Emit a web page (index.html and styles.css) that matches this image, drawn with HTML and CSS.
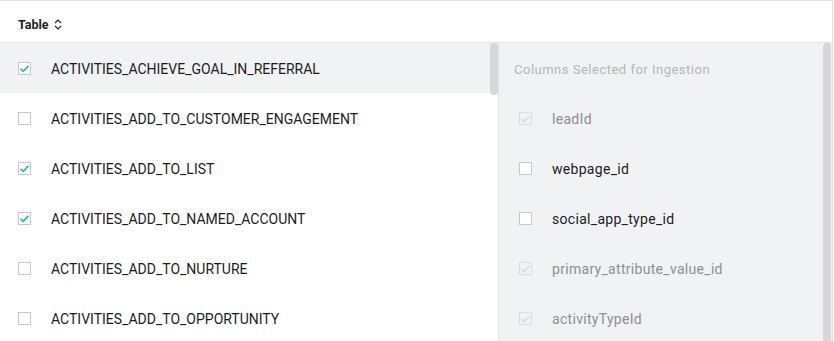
FILE: index.html
```html
<!DOCTYPE html>
<html>
<head>
<meta charset="utf-8">
<link rel="stylesheet" href="styles.css">
</head>
<body>
<div class="frame">
  <div class="header">
    <span class="header-title">Table</span>
    <svg class="sort" width="8" height="11" viewBox="0 0 8 11"><path d="M1 4 L4 1 L7 4 M1 7 L4 10 L7 7" fill="none" stroke="#222" stroke-width="1.2"/></svg>
  </div>
  <div class="body">
    <div class="tables">
      <div class="row active"><span class="cb checked"><svg viewBox="0 0 13 13"><path d="M2.5 6.8 L5.2 9.3 L10.5 3.8" fill="none" stroke="#1fbdb5" stroke-width="1.8"/></svg></span><span class="label">ACTIVITIES_ACHIEVE_GOAL_IN_REFERRAL</span></div>
      <div class="row"><span class="cb"></span><span class="label">ACTIVITIES_ADD_TO_CUSTOMER_ENGAGEMENT</span></div>
      <div class="row"><span class="cb checked"><svg viewBox="0 0 13 13"><path d="M2.5 6.8 L5.2 9.3 L10.5 3.8" fill="none" stroke="#1fbdb5" stroke-width="1.8"/></svg></span><span class="label">ACTIVITIES_ADD_TO_LIST</span></div>
      <div class="row"><span class="cb checked"><svg viewBox="0 0 13 13"><path d="M2.5 6.8 L5.2 9.3 L10.5 3.8" fill="none" stroke="#1fbdb5" stroke-width="1.8"/></svg></span><span class="label">ACTIVITIES_ADD_TO_NAMED_ACCOUNT</span></div>
      <div class="row"><span class="cb"></span><span class="label">ACTIVITIES_ADD_TO_NURTURE</span></div>
      <div class="row"><span class="cb"></span><span class="label">ACTIVITIES_ADD_TO_OPPORTUNITY</span></div>
      <div class="thumb thumb-left"></div>
    </div>
    <div class="columns">
      <div class="col-title">Columns Selected for Ingestion</div>
      <div class="row col disabled"><span class="cb dis"><svg viewBox="0 0 13 13"><path d="M2.5 6.8 L5.2 9.3 L10.5 3.8" fill="none" stroke="#d3d4d8" stroke-width="1.2"/></svg></span><span class="label">leadId</span></div>
      <div class="row col"><span class="cb"></span><span class="label">webpage_id</span></div>
      <div class="row col"><span class="cb"></span><span class="label">social_app_type_id</span></div>
      <div class="row col disabled"><span class="cb dis"><svg viewBox="0 0 13 13"><path d="M2.5 6.8 L5.2 9.3 L10.5 3.8" fill="none" stroke="#d3d4d8" stroke-width="1.2"/></svg></span><span class="label">primary_attribute_value_id</span></div>
      <div class="row col disabled"><span class="cb dis"><svg viewBox="0 0 13 13"><path d="M2.5 6.8 L5.2 9.3 L10.5 3.8" fill="none" stroke="#d3d4d8" stroke-width="1.2"/></svg></span><span class="label">activityTypeId</span></div>
      <div class="thumb thumb-right"></div>
    </div>
  </div>
</div>
</body>
</html>
```
FILE: styles.css
```css
html, body {
  margin: 0;
  padding: 0;
  background: #fff;
  overflow: hidden;
}
body {
  font-family: Roboto, "Liberation Sans", sans-serif;
  color: #222;
}
.frame {
  width: 832px;
  height: 341px;
  border-top: 1px solid #e3e3e3;
  border-right: 1px solid #e3e3e3;
  overflow: hidden;
}
.header {
  height: 42px;
  box-sizing: border-box;
  border-bottom: 1px solid #e3e3e3;
  display: flex;
  align-items: center;
  padding-left: 18px;
  padding-top: 6px;
  gap: 5px;
}
.header-title {
  font-size: 12.5px;
  font-weight: 700;
  color: #1f1f1f;
}
.sort {
  display: block;
  margin-top: -1px;
}
.body {
  display: flex;
  height: 300px;
}
.tables {
  position: relative;
  width: 498px;
  flex: none;
}
.row {
  height: 50px;
  display: flex;
  align-items: center;
  padding-left: 18px;
  gap: 20px;
  font-size: 14px;
  box-sizing: border-box;
  padding-top: 1px;
}
.row.active {
  background: #f1f2f4;
}
.label {
  color: #1c1c1c;
}
.cb {
  width: 11px;
  height: 11px;
  border: 1px solid #c6c7cb;
  background: #fff;
  flex: none;
  position: relative;
}
.cb svg {
  position: absolute;
  left: -1px;
  top: -1px;
  width: 13px;
  height: 13px;
}
.cb.dis {
  border-color: #dcdde0;
  background: transparent;
}
.columns {
  position: relative;
  flex: 1;
  background: #f1f2f4;
  border-left: 1px solid #e1e2e5;
}
.col-title {
  height: 50px;
  display: flex;
  align-items: center;
  padding-left: 15px;
  font-size: 13px;
  letter-spacing: 0.5px;
  color: #b3b5ba;
  padding-top: 3px;
  box-sizing: border-box;
}
.row.col {
  padding-left: 20px;
  letter-spacing: 0.3px;
}
.row.col .label {
  color: #1c1c1c;
}
.row.col.disabled .label {
  color: #8d8f95;
}
.thumb {
  position: absolute;
  width: 8px;
  border-radius: 4px;
  background: #d7d7d7;
}
.thumb-left {
  left: 490px;
  top: 0;
  height: 52px;
}
.thumb-right {
  right: 1px;
  top: 0;
  height: 320px;
}
```
